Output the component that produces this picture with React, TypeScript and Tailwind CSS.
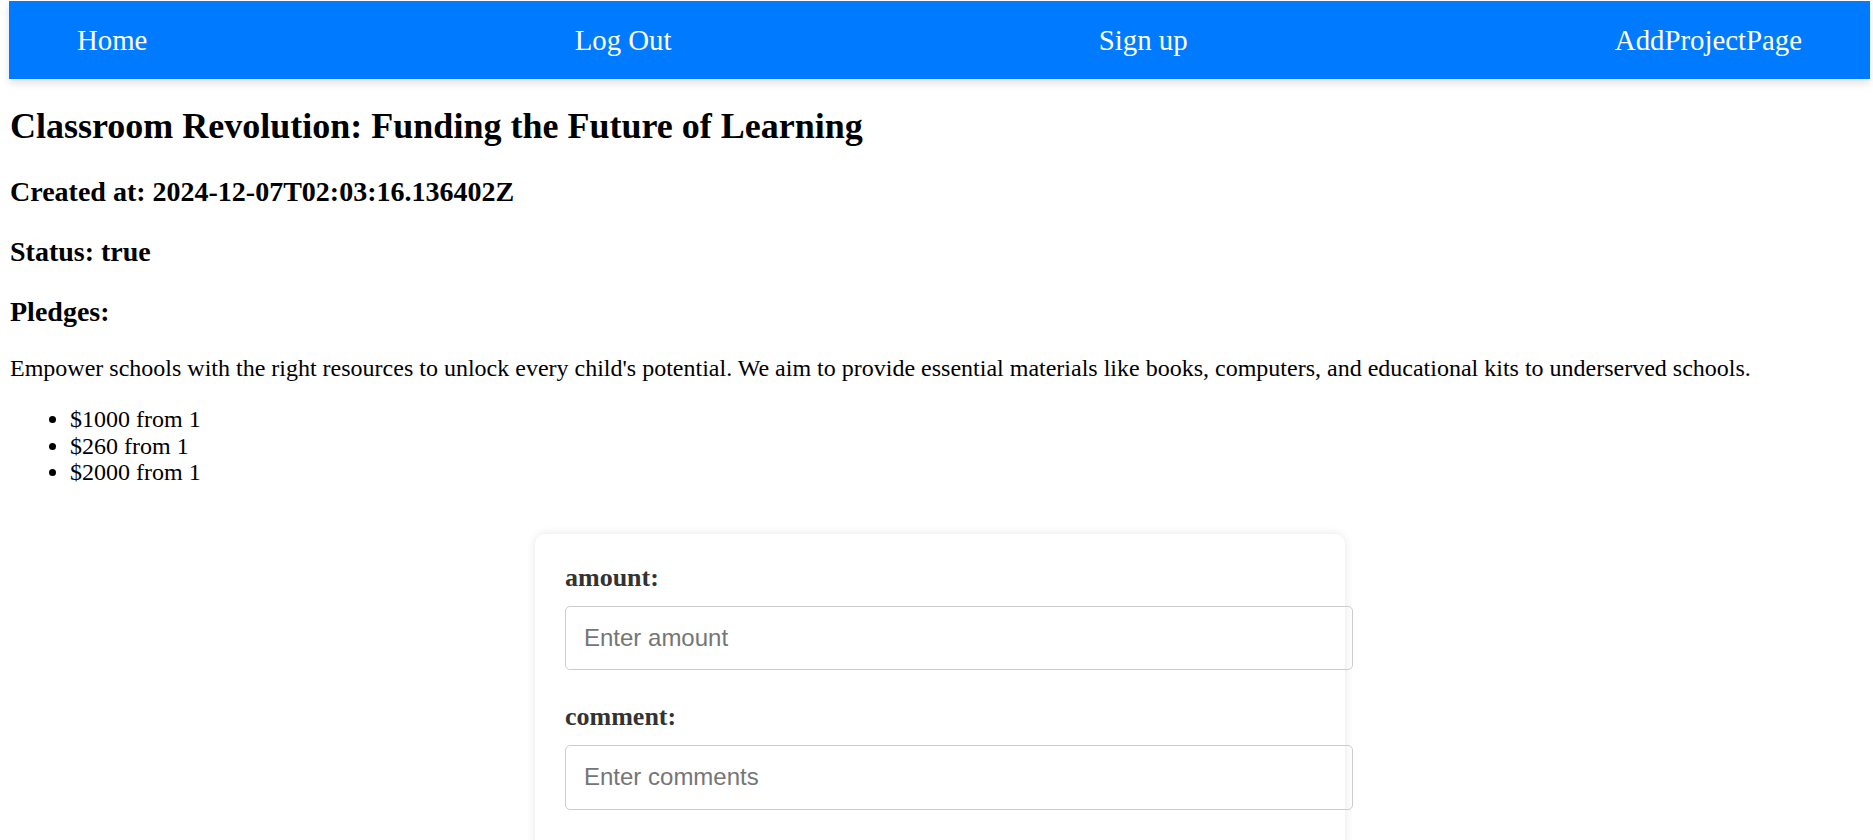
const pledges = [
  { amount: 1000, supporter: 1 },
  { amount: 260, supporter: 1 },
  { amount: 2000, supporter: 1 },
];

const links = ["Home", "Log Out", "Sign up", "AddProjectPage"];

export default function App() {
  return (
    <div className="min-h-screen bg-white text-black font-['Liberation_Serif',serif] leading-[1.107] text-[24px] pb-10">
      <nav className="mt-[1px] ml-[9px] mr-[3px] h-[78px] pt-[2px] bg-[#007bff] shadow-[0_4px_8px_rgba(0,0,0,0.12)] flex items-center justify-between px-[68px]">
        {links.map((link) => (
          <a key={link} href="#" className="text-white text-[28.8px]">
            {link}
          </a>
        ))}
      </nav>

      <div className="px-[10px]">
        <h2 className="mt-[28px] text-[36px] font-bold">
          Classroom Revolution: Funding the Future of Learning
        </h2>
        <h3 className="mt-[29px] text-[28px] font-bold">
          Created at: 2024-12-07T02:03:16.136402Z
        </h3>
        <h3 className="mt-[29px] text-[28px] font-bold">Status: true</h3>
        <h3 className="mt-[29px] text-[28px] font-bold">Pledges:</h3>
        <p className="mt-[28px]">
          Empower schools with the right resources to unlock every child's
          potential. We aim to provide essential materials like books,
          computers, and educational kits to underserved schools.
        </p>
        <ul className="mt-[25px] list-disc pl-[60px]">
          {pledges.map((pledge, i) => (
            <li key={i}>
              ${pledge.amount} from {pledge.supporter}
            </li>
          ))}
        </ul>

        <form className="mt-[48px] ml-[525px] w-[810px] bg-white rounded-[10px] shadow-[0_0_10px_rgba(0,0,0,0.1)] p-[30px]">
          <div className="mb-[33px]">
            <label className="block mb-[13px] text-[26px] font-bold text-[#333]">
              amount:
            </label>
            <input
              type="text"
              placeholder="Enter amount"
              className="w-[788px] p-[18px] border border-[#ccc] rounded-[5px] text-[24px] font-['Liberation_Sans',sans-serif] placeholder:text-[#757575] outline-none"
            />
          </div>
          <div className="mb-[33px]">
            <label className="block mb-[13px] text-[26px] font-bold text-[#333]">
              comment:
            </label>
            <input
              type="text"
              placeholder="Enter comments"
              className="w-[788px] p-[18px] border border-[#ccc] rounded-[5px] text-[24px] font-['Liberation_Sans',sans-serif] placeholder:text-[#757575] outline-none"
            />
          </div>
          <button
            type="submit"
            className="w-full bg-[#007bff] text-white text-[24px] py-[14px] rounded-[5px]"
          >
            Pledge
          </button>
        </form>
      </div>
    </div>
  );
}
